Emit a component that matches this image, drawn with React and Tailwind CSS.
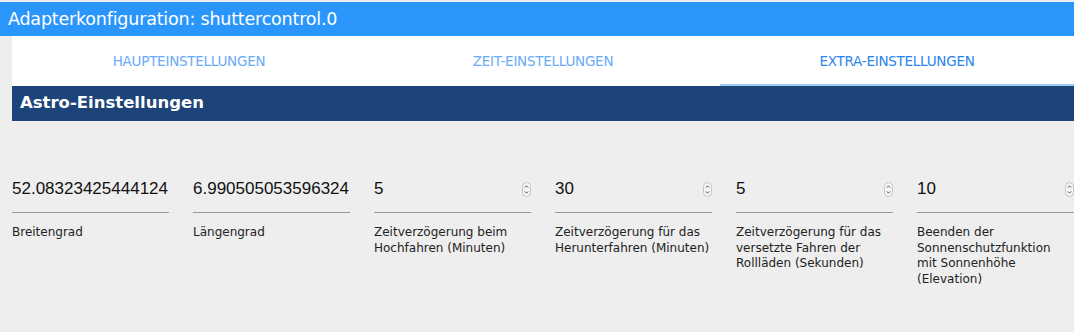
import React from "react";

function Spinner() {
  return (
    <svg width="9" height="15" viewBox="0 0 9 15" className="shrink-0">
      <rect x="0.5" y="0.5" width="8" height="14" rx="4" fill="#f7f7f7" stroke="#c4c4c4" />
      <path d="M2.8 5.6 L4.5 3.8 L6.2 5.6" fill="none" stroke="#555" strokeWidth="1" />
      <path d="M2.8 9.4 L4.5 11.2 L6.2 9.4" fill="none" stroke="#555" strokeWidth="1" />
    </svg>
  );
}

const fields = [
  { value: "52.08323425444124", label: ["Breitengrad"], spin: false },
  { value: "6.990505053596324", label: ["Längengrad"], spin: false },
  { value: "5", label: ["Zeitverzögerung beim", "Hochfahren (Minuten)"], spin: true },
  { value: "30", label: ["Zeitverzögerung für das", "Herunterfahren (Minuten)"], spin: true },
  { value: "5", label: ["Zeitverzögerung für das", "versetzte Fahren der", "Rollläden (Sekunden)"], spin: true },
  { value: "10", label: ["Beenden der", "Sonnenschutzfunktion", "mit Sonnenhöhe", "(Elevation)"], spin: true },
];

export default function App() {
  return (
    <div className="w-[1074px] h-[332px] overflow-hidden bg-[#eeeeee] flex flex-col" style={{ fontFamily: '"DejaVu Sans", sans-serif' }}>
      <div className="h-[2px] bg-[#eeeeee]" />
      <div className="h-[34px] bg-[#2a96fc] flex items-center pl-[8px] text-white text-[17.5px] tracking-[-0.2px]">
        Adapterkonfiguration: shuttercontrol.0
      </div>
      <div className="pl-[12px] flex flex-col">
        <div className="h-[50px] bg-white grid grid-cols-3 text-[13.5px] tracking-[-0.25px]">
          <div className="flex items-center justify-center text-[#6aaaf6]">HAUPTEINSTELLUNGEN</div>
          <div className="flex items-center justify-center text-[#6aaaf6]">ZEIT-EINSTELLUNGEN</div>
          <div className="flex items-center justify-center text-[#2a84ee] relative">
            EXTRA-EINSTELLUNGEN
            <div className="absolute left-0 right-0 bottom-0 h-[2px] bg-[#9fcdf6]" />
          </div>
        </div>
        <div className="h-[35px] bg-[#1c4479] flex items-center pl-[8px] text-white font-bold text-[16.5px]">
          Astro-Einstellungen
        </div>
        <div className="flex gap-[24px] pt-[56px]">
          {fields.map((f, i) => (
            <div key={i} className="w-[157px] shrink-0 flex flex-col">
              <div className="h-[24px] flex items-center justify-between border-b border-[#9a9a9a] pb-[11px] box-content">
                <span className="text-[17px] text-[#111] whitespace-nowrap" style={{ fontFamily: '"Liberation Sans", Arial, sans-serif' }}>{f.value}</span>
                {f.spin && <Spinner />}
              </div>
              <div className="pt-[12px] text-[12px] leading-[15.5px] text-[#222] whitespace-nowrap">
                {f.label.map((l, j) => (
                  <div key={j}>{l}</div>
                ))}
              </div>
            </div>
          ))}
        </div>
      </div>
    </div>
  );
}
